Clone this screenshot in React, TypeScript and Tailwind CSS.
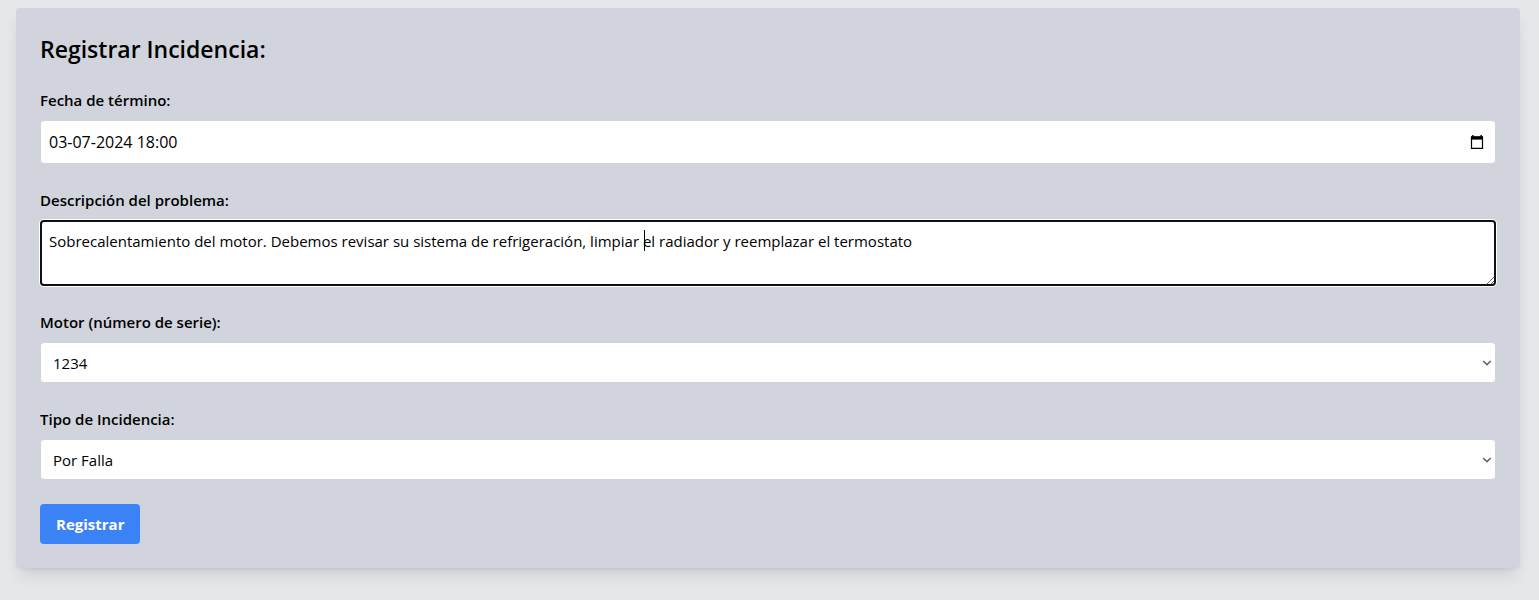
import { useId, useState } from "react";
import type { ReactNode } from "react";

const fieldBox = "w-full rounded border border-[#d1d4dc] bg-white leading-6 text-black";

function Field({ id, label, children }: { id: string; label: string; children: ReactNode }) {
  return (
    <div className="mb-6">
      <label htmlFor={id} className="mb-2 block text-[15px] leading-6 font-semibold text-black">
        {label}
      </label>
      {children}
    </div>
  );
}

function CalendarIcon() {
  return (
    <svg width="14" height="15" viewBox="0 0 14 15" aria-hidden="true">
      <path d="M2.2 0h1.4v2H2.2zM10.4 0h1.4v2h-1.4z" fill="#000" />
      <path d="M1.5 2h11v11.4h-11z" fill="none" stroke="#000" strokeWidth="1.2" />
      <path d="M1 1.3h12V4.6H1z" fill="#000" />
    </svg>
  );
}

function SelectField({ label, options }: { label: string; options: string[] }) {
  const id = useId();
  return (
    <Field id={id} label={label}>
      <div className="relative">
        <select id={id} className={`${fieldBox} block h-[41px] appearance-none px-3 text-[15px]`}>
          {options.map((option) => (
            <option key={option}>{option}</option>
          ))}
        </select>
        <svg
          className="pointer-events-none absolute top-1/2 right-1 -translate-y-1/2"
          width="10"
          height="6"
          viewBox="0 0 10 6"
          aria-hidden="true"
        >
          <path d="M1.2 1l3.8 3.6L8.8 1" fill="none" stroke="#666" strokeWidth="1.6" />
        </svg>
      </div>
    </Field>
  );
}

export default function App() {
  const [date, setDate] = useState("03-07-2024 18:00");
  const [description, setDescription] = useState(
    "Sobrecalentamiento del motor. Debemos revisar su sistema de refrigeración, limpiar el radiador y reemplazar el termostato",
  );

  return (
    <div className="min-h-screen bg-gray-200 py-2 pr-[19px] pl-4 font-['Open_Sans','Noto_Sans',sans-serif]">
      <form
        className="rounded bg-[#d1d4dc] p-6 shadow-lg"
        onSubmit={(event) => event.preventDefault()}
      >
        <h2 className="mb-[22px] text-[23px] leading-[34px] font-semibold text-black">
          Registrar Incidencia:
        </h2>

        <Field id="end-date" label="Fecha de término:">
          <div className={`${fieldBox} flex h-11 items-center pr-[11px] text-base`}>
            <input
              id="end-date"
              type="text"
              value={date}
              onChange={(event) => setDate(event.target.value)}
              className="min-w-0 flex-1 bg-transparent px-2 outline-none"
            />
            <button type="button" aria-label="Abrir calendario">
              <CalendarIcon />
            </button>
          </div>
        </Field>

        <Field id="description" label="Descripción del problema:">
          <div className="relative">
            <textarea
              id="description"
              rows={2}
              value={description}
              onChange={(event) => setDescription(event.target.value)}
              className={`${fieldBox} block resize-y px-2 py-2 text-[15px] shadow-[0_0_0_1px_white] outline-2 -outline-offset-2 outline-[#101010]`}
            />
            <span className="pointer-events-none absolute top-[10px] left-[604px] h-[21px] w-px bg-black" />
          </div>
        </Field>

        <SelectField label="Motor (número de serie):" options={["1234"]} />
        <SelectField label="Tipo de Incidencia:" options={["Por Falla"]} />

        <button
          type="submit"
          className="block rounded bg-[#3b82f6] px-4 py-2 text-[15px] leading-6 font-bold text-white"
        >
          Registrar
        </button>
      </form>
    </div>
  );
}
